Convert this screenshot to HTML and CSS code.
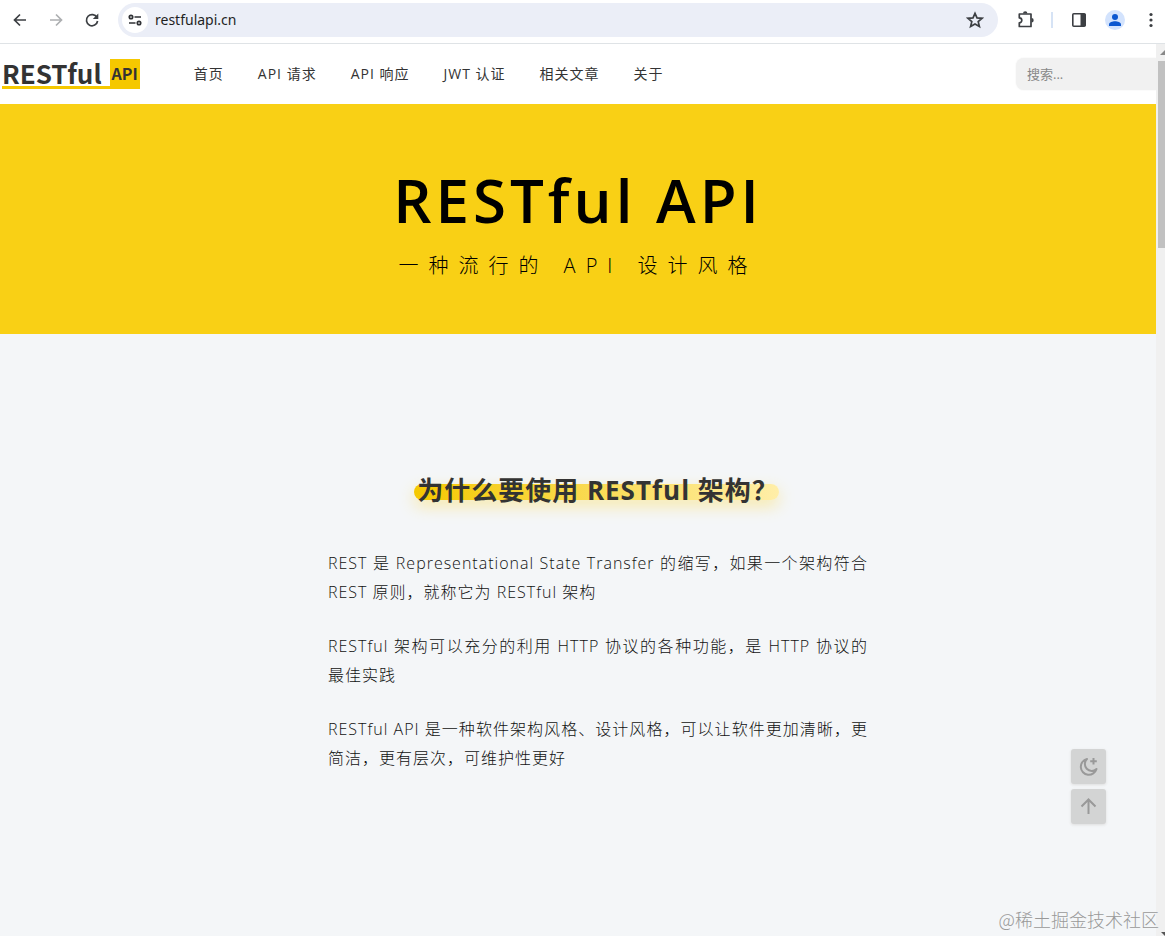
FILE: index.html
```html
<!DOCTYPE html>
<html lang="zh-CN">
<head>
  <meta charset="utf-8">
  <meta name="viewport" content="width=device-width, initial-scale=1">
  <title>RESTful API</title>
  <link rel="stylesheet" href="styles.css">
</head>
<body>
  <div class="toolbar">
    <button class="tool-btn" aria-label="后退">
      <svg width="18" height="18" viewBox="0 0 18 18" fill="none" stroke="#3c3f43" stroke-width="1.7"><path d="M15 9H4M9 3.5 3.5 9 9 14.5"/></svg>
    </button>
    <button class="tool-btn" aria-label="前进">
      <svg width="18" height="18" viewBox="0 0 18 18" fill="none" stroke="#adafb1" stroke-width="1.7"><path d="M3 9h11M9 3.5 14.5 9 9 14.5"/></svg>
    </button>
    <button class="tool-btn" aria-label="重新加载">
      <svg width="18" height="18" viewBox="0 0 18 18"><path d="M14 6.5A5.6 5.6 0 1 0 14.6 10" fill="none" stroke="#3c3f43" stroke-width="1.7"/><path d="M15.3 2.5v5.5H9.8z" fill="#3c3f43"/></svg>
    </button>
    <div class="address-bar">
      <button class="site-info" aria-label="查看网站信息">
        <svg width="14" height="12" viewBox="0 0 14 12" fill="none" stroke="#303236" stroke-width="1.7"><circle cx="3" cy="3" r="1.7"/><path d="M6.5 3H13M1 9h6.5"/><circle cx="11" cy="9" r="1.7"/></svg>
      </button>
      <input class="address-input" type="text" value="restfulapi.cn" aria-label="地址栏">
      <button class="bookmark" aria-label="收藏">
        <svg width="18" height="18" viewBox="0 0 18 18" fill="none" stroke="#3c3f43" stroke-width="1.7"><path d="M9 2.3 11 6.9 16 7.3 12.2 10.6 13.4 15.5 9 12.9 4.6 15.5 5.8 10.6 2 7.3 7 6.9z"/></svg>
      </button>
    </div>
    <div class="toolbar-actions">
      <button class="tool-btn" aria-label="扩展程序">
        <svg width="20" height="20" viewBox="0 0 20 20"><path d="M4.3 4H16v12.5H4.3v-3.7a2.5 2.5 0 0 0 0-5z" fill="none" stroke="#3c3f43" stroke-width="1.7" stroke-linejoin="round"/><path d="M8 3.5a2.2 2.2 0 0 1 4.4 0zM16.5 8a2.2 2.2 0 0 1 0 4.4z" fill="#3c3f43"/></svg>
      </button>
      <span class="toolbar-divider"></span>
      <button class="tool-btn" aria-label="侧边栏">
        <svg width="16" height="16" viewBox="0 0 16 16"><rect x="1.8" y="1.8" width="12.4" height="12.4" rx="1" fill="none" stroke="#3c3f43" stroke-width="1.6"/><path d="M9.5 2h5v12h-5z" fill="#3c3f43"/></svg>
      </button>
      <button class="tool-btn" aria-label="个人资料">
        <svg width="20" height="20" viewBox="0 0 20 20"><circle cx="10" cy="10" r="10" fill="#d3e3fd"/><circle cx="10" cy="7" r="3" fill="#0b57d0"/><path d="M4 16v-1.5c0-2 3.5-3.2 6-3.2s6 1.2 6 3.2V16z" fill="#0b57d0"/></svg>
      </button>
      <button class="tool-btn menu-btn" aria-label="菜单">
        <svg width="4" height="16" viewBox="0 0 4 16" fill="#3c3f43"><circle cx="2" cy="2.5" r="1.6"/><circle cx="2" cy="8" r="1.6"/><circle cx="2" cy="13.5" r="1.6"/></svg>
      </button>
    </div>
  </div>

  <div class="viewport">
    <div class="page">
      <header class="header">
        <a class="logo" href="#">
          <span class="logo-name">RESTful</span>
          <span class="logo-badge">API</span>
        </a>
        <nav class="nav">
          <a href="#">首页</a>
          <a href="#">API 请求</a>
          <a href="#">API 响应</a>
          <a href="#">JWT 认证</a>
          <a href="#">相关文章</a>
          <a href="#">关于</a>
        </nav>
        <input class="search" type="search" placeholder="搜索..." aria-label="搜索">
      </header>

      <section class="hero">
        <h1>RESTful API</h1>
        <p>一种流行的 API 设计风格</p>
      </section>

      <main class="content">
        <h2><span>为什么要使用 RESTful 架构？</span></h2>
        <p>REST 是 Representational State Transfer 的缩写，如果一个架构符合 REST 原则，就称它为 RESTful 架构</p>
        <p>RESTful 架构可以充分的利用 HTTP 协议的各种功能，是 HTTP 协议的最佳实践</p>
        <p>RESTful API 是一种软件架构风格、设计风格，可以让软件更加清晰，更简洁，更有层次，可维护性更好</p>
      </main>
    </div>
    <div class="scrollbar">
      <svg width="5" height="17" viewBox="0 0 5 17"><path d="M5 6v5H0z" fill="#888"/></svg>
      <span class="scroll-thumb"></span>
      <span class="scroll-down"></span>
    </div>
  </div>

  <div class="float-actions">
    <button aria-label="深色模式">
      <svg width="20" height="20" viewBox="0 0 20 20" fill="none" stroke="#999" stroke-width="2"><path d="M8 2A8 8 0 1 0 17.500 12 6.500 6.500 0 0 1 8 2z" stroke-linejoin="round"/><path d="M14.500 1v6.500M11.200 4.200h6.600"/></svg>
    </button>
    <button aria-label="返回顶部">
      <svg width="20" height="20" viewBox="0 0 20 20" fill="none" stroke="#999" stroke-width="2"><path d="M9.500 17V2.500M2.500 9.500l7-7 7 7"/></svg>
    </button>
  </div>
  <div class="watermark">@稀土掘金技术社区</div>
</body>
</html>
```
FILE: styles.css
```css
* {
  box-sizing: border-box;
}

body {
  margin: 0;
  min-height: 100vh;
  display: flex;
  flex-direction: column;
  position: relative;
  overflow-x: hidden;
  font-family: "Open Sans", "Noto Sans CJK SC", sans-serif;
  color: #333;
  background: #f4f6f8;
}

button {
  padding: 0;
  border: none;
  background: none;
  cursor: pointer;
}

svg {
  display: block;
}

/* browser bar */
.toolbar {
  display: flex;
  align-items: center;
  height: 44px;
  padding: 0 4px 4px 2px;
  background: #fff;
  border-bottom: 1px solid #dfe3e6;
}

.tool-btn {
  display: flex;
  align-items: center;
  justify-content: center;
  width: 36px;
  height: 32px;
}

.address-bar {
  flex: 1;
  display: flex;
  align-items: center;
  height: 34px;
  margin-left: 8px;
  padding: 0 14px 0 4px;
  border-radius: 17px;
  background: #ebeef7;
}

.site-info {
  display: flex;
  align-items: center;
  justify-content: center;
  width: 26px;
  height: 26px;
  border-radius: 50%;
  background: #fff;
}

.address-input {
  flex: 1;
  min-width: 0;
  padding: 0 7px;
  border: none;
  outline: none;
  background: none;
  color: #1f1f1f;
  font: 14px "Noto Sans", "Open Sans", sans-serif;
}

.toolbar-actions {
  display: flex;
  align-items: center;
  margin-left: 9px;
}

.toolbar-divider {
  width: 2px;
  height: 16px;
  margin: 0 8px;
  background: #d6e3f5;
}

.menu-btn {
  width: 20px;
  margin-left: 8px;
}

/* page */
.viewport {
  flex: 1;
  display: flex;
}

.page {
  flex: 1;
  min-width: 0;
}

.header {
  display: flex;
  align-items: center;
  height: 60px;
  padding-left: 2px;
  background: #fff;
}

.logo {
  display: flex;
  align-items: center;
  height: 30px;
  border-bottom: 3px solid #f5c800;
  color: #333;
  font-family: "Noto Sans CJK SC", sans-serif;
  text-decoration: none;
}

.logo-name {
  font-size: 26px;
  font-weight: 700;
  line-height: 26px;
}

.logo-badge {
  align-self: flex-start;
  margin-left: 8px;
  padding: 2px 2px 1px;
  background: #f5c800;
  font-size: 16px;
  font-weight: 700;
  line-height: 24px;
}

.nav {
  flex: 1;
  display: flex;
  gap: 34px;
  margin-left: 54px;
}

.nav a {
  color: #333;
  font-size: 14px;
  letter-spacing: 1px;
  line-height: 20px;
  text-decoration: none;
  white-space: nowrap;
}

.search {
  width: 140px;
  height: 32px;
  padding: 0 11px;
  border: none;
  border-radius: 8px 0 0 8px;
  background: #f1f1f1;
  box-shadow: 0 0 2px #eee;
  font: 13px "Open Sans", "Noto Sans CJK SC", sans-serif;
}

.search::placeholder {
  color: #888;
}

.hero {
  height: 230px;
  padding-top: 56px;
  background: #f9d015;
  color: #000;
  text-align: center;
}

.hero h1 {
  margin: 0;
  font-size: 60px;
  font-weight: 600;
  letter-spacing: 4px;
  line-height: 80px;
}

.hero p {
  margin: 11px 0 0;
  font-size: 20px;
  font-weight: 300;
  letter-spacing: 10px;
  line-height: 30px;
}

.content {
  width: 580px;
  max-width: 100%;
  margin: 0 auto;
  padding: 136px 0 40px 40px;
}

.content h2 {
  margin: 0 0 39px;
  font-size: 26px;
  font-weight: 700;
  letter-spacing: 1px;
  line-height: 40px;
  text-align: center;
  white-space: nowrap;
}

.content h2 span {
  position: relative;
  z-index: 0;
  display: inline-block;
}

/* marker stroke behind the title */
.content h2 span::before {
  content: "";
  position: absolute;
  z-index: -1;
  left: -3px;
  right: 0;
  top: 14px;
  height: 16px;
  border-radius: 8px;
  background: linear-gradient(90deg, #f5c800, #ffeea8);
  box-shadow: 0 6px 16px rgba(255, 215, 50, 0.4);
}

.content p {
  margin: 0 0 25px;
  color: #111;
  font-size: 16px;
  font-weight: 300;
  letter-spacing: 1px;
  line-height: 29px;
  text-align: justify;
}

.scrollbar {
  display: flex;
  flex-direction: column;
  align-items: flex-end;
  width: 9px;
  background: #f0f0f0;
}

.scroll-thumb {
  width: 7px;
  height: 187px;
  background: #c1c1c1;
}

.scroll-down {
  margin-top: auto;
  border-top: 4px solid #555;
  border-left: 4px solid transparent;
}

.float-actions {
  position: absolute;
  right: 59px;
  bottom: 112px;
  display: flex;
  flex-direction: column;
  gap: 5px;
}

.float-actions button {
  display: flex;
  align-items: center;
  justify-content: center;
  width: 35px;
  height: 35px;
  border-radius: 3px;
  background: #d3d4d4;
  box-shadow: 0 1px 3px #ddd;
}

.watermark {
  position: absolute;
  right: 6px;
  bottom: 3px;
  color: #999;
  font-family: "Noto Sans CJK SC", sans-serif;
  font-size: 18px;
  font-weight: 300;
  line-height: 27px;
}
```
